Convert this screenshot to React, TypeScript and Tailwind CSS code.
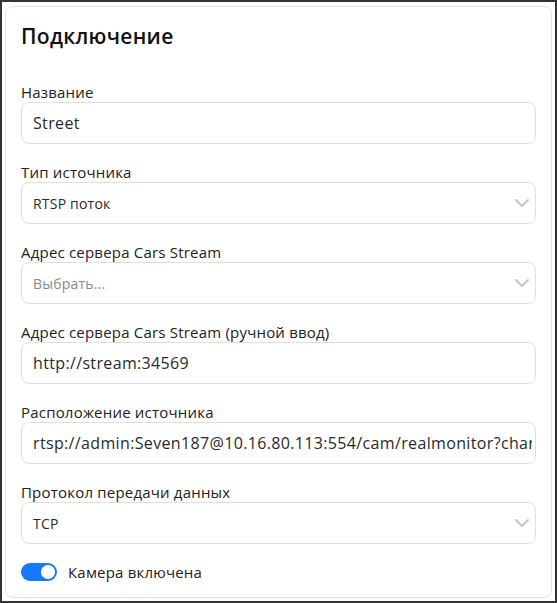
import { ChevronDown } from "lucide-react";

const font = { fontFamily: '"Open Sans", "Liberation Sans", sans-serif' };

const Label = ({ children }: { children: React.ReactNode }) => (
  <div className="h-5 text-[15px] leading-5 tracking-[0.2px] text-[#222]">{children}</div>
);

const TextField = ({ value }: { value: string }) => (
  <input
    readOnly
    value={value}
    className="block h-[42px] w-full rounded-lg border border-[#dedede] bg-white pl-[11px] pr-[3px] text-[16px] tracking-[0.35px] text-[#2a2a2a] outline-none"
  />
);

const SelectField = ({ value, placeholder }: { value: string; placeholder?: boolean }) => (
  <div className="flex h-[42px] items-center justify-between rounded-lg border border-[#dedede] bg-white pl-[11px] pr-[1px]">
    <span className={placeholder ? "text-[14px] tracking-[0.2px] text-[#8a8a8a]" : "text-[14px] tracking-[0.2px] text-[#2a2a2a]"}>{value}</span>
    <ChevronDown size={24} strokeWidth={2} className="text-[#c4c4c4]" />
  </div>
);

export default function App() {
  return (
    <div style={font} className="h-[603px] w-[557px] border-2 border-[#333] bg-white px-[3px] pb-[3px] pt-[4px]">
      <div className="flex h-full flex-col rounded-lg border border-[#e3e3e3] px-[15px] pt-[15px]">
        <h1 className="h-7 text-[21px] font-semibold leading-7 tracking-[0.3px] text-[#111]">Подключение</h1>

        <div className="mt-8 flex flex-col gap-[18px]">
          <div>
            <Label>Название</Label>
            <TextField value="Street" />
          </div>
          <div>
            <Label>Тип источника</Label>
            <SelectField value="RTSP поток" />
          </div>
          <div>
            <Label>Адрес сервера Cars Stream</Label>
            <SelectField value="Выбрать..." placeholder />
          </div>
          <div>
            <Label>Адрес сервера Cars Stream (ручной ввод)</Label>
            <TextField value="http://stream:34569" />
          </div>
          <div>
            <Label>Расположение источника</Label>
            <TextField value="rtsp://admin:Seven187@10.16.80.113:554/cam/realmonitor?channel=1&subtype=0" />
          </div>
          <div>
            <Label>Протокол передачи данных</Label>
            <SelectField value="TCP" />
          </div>
        </div>

        <div className="mt-[17px] flex items-center gap-[11px]">
          <div className="flex h-[18px] w-9 items-center justify-end rounded-full bg-[#1677ff] px-[2px]">
            <div className="h-[14px] w-[14px] rounded-full bg-white" />
          </div>
          <span className="text-[15px] tracking-[0.2px] text-[#222]">Камера включена</span>
        </div>
      </div>
    </div>
  );
}
